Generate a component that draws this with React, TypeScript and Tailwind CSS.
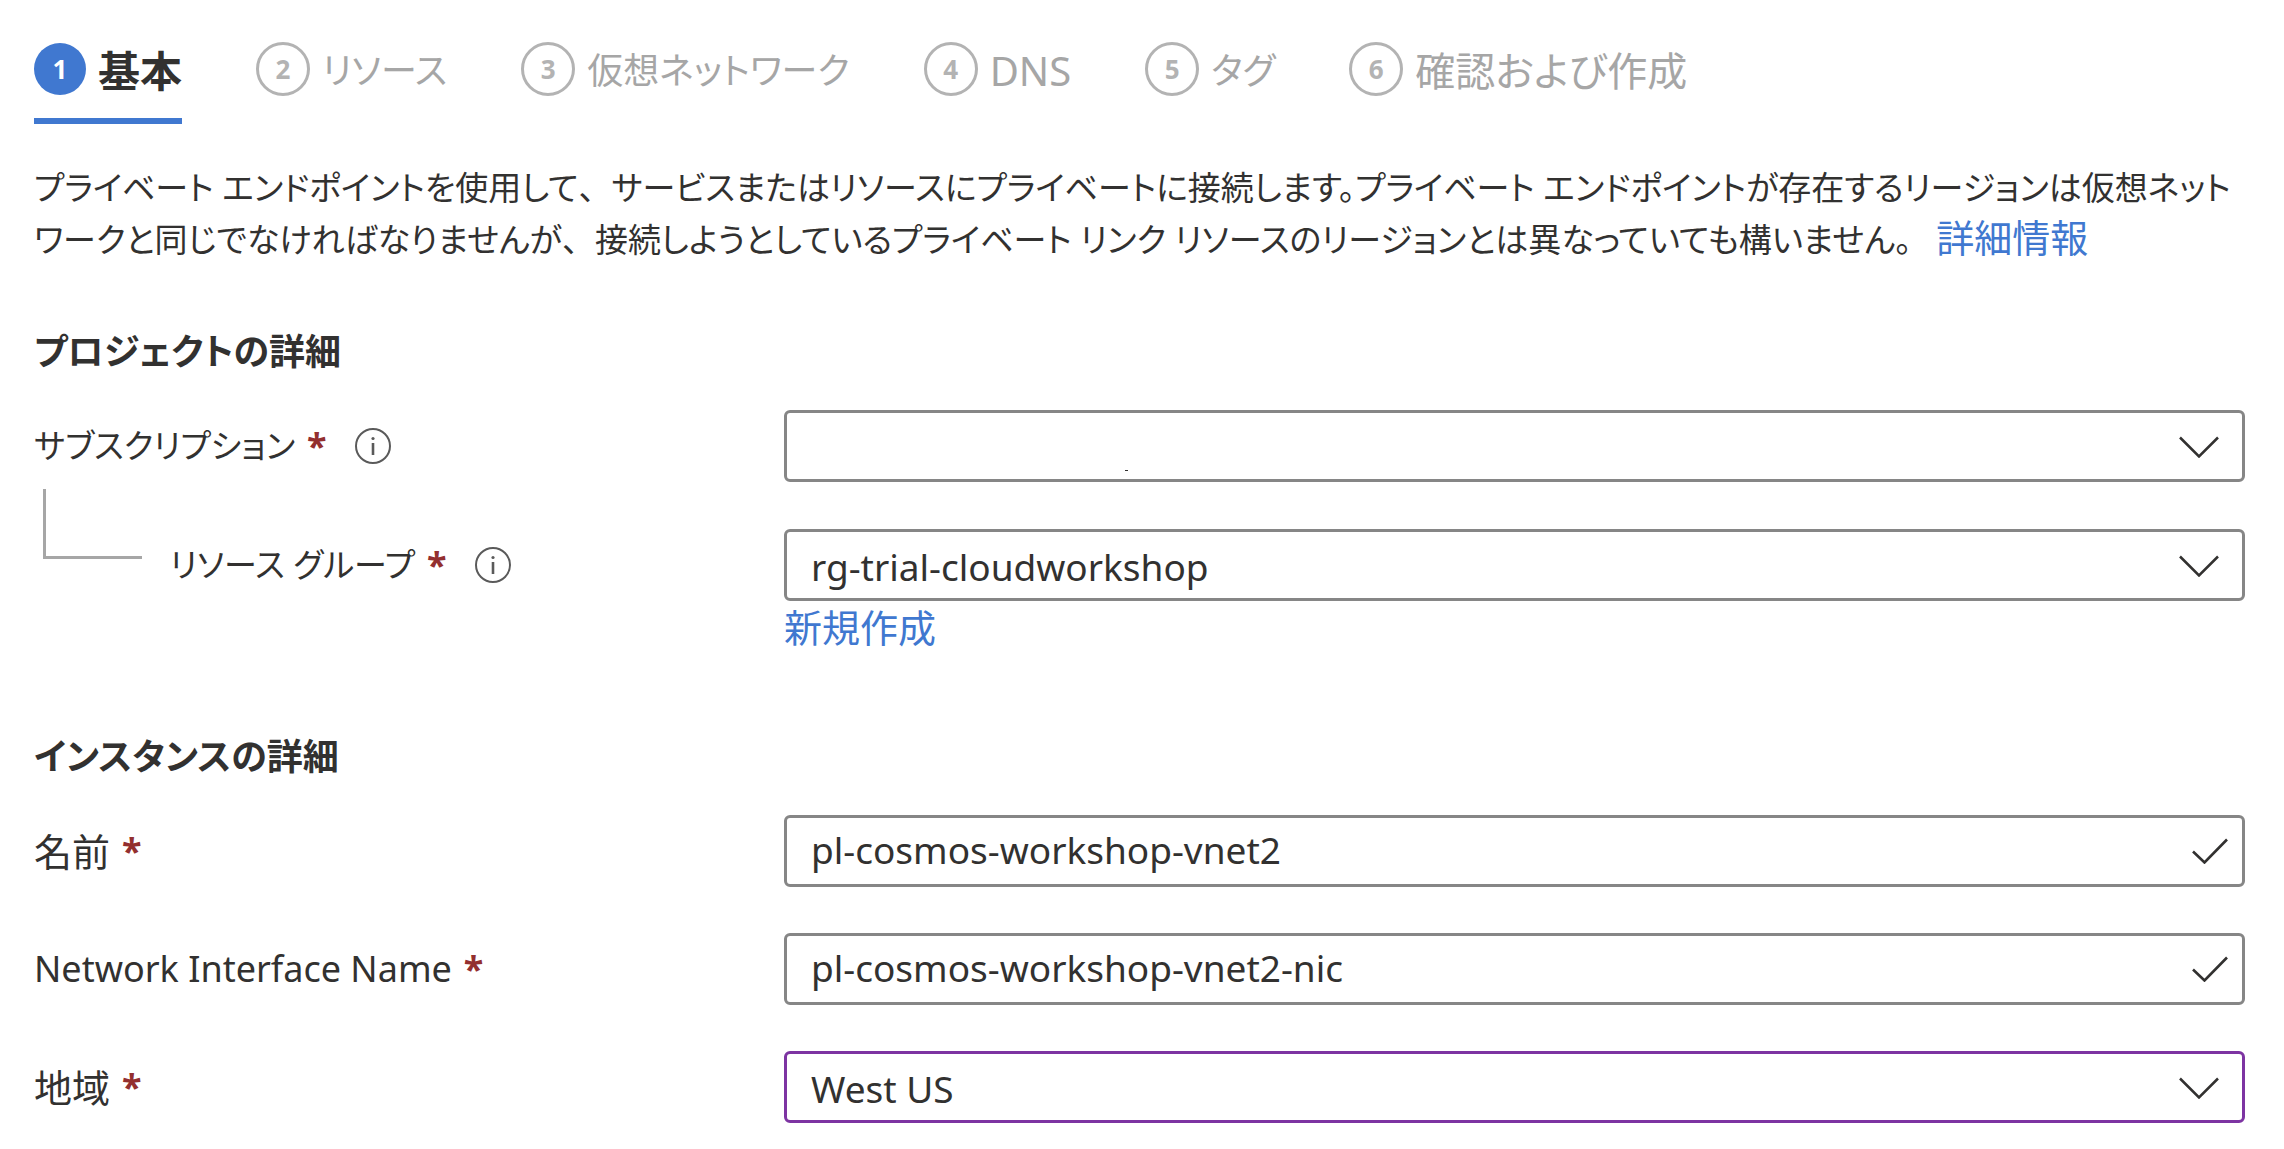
import { useState, type ReactNode } from "react";

const steps = [
  { title: "基本", size: "text-[42px]" },
  { title: "リソース", size: "text-[36px]" },
  { title: "仮想ネットワーク", size: "text-[36px]" },
  { title: "DNS", size: "text-[40px]" },
  { title: "タグ", size: "text-[36px]" },
  { title: "確認および作成", size: "text-[40px]" },
];

function InfoButton({ label }: { label: string }) {
  return (
    <button type="button" aria-label={label} className="ml-7 shrink-0 text-[#5a5a5a]">
      <svg viewBox="0 0 36 36" className="size-9" fill="none" stroke="currentColor" strokeWidth="2">
        <circle cx="18" cy="18" r="17" />
        <path d="M18 15v12" strokeWidth="2.6" />
        <circle cx="18" cy="10.5" r="1.6" fill="currentColor" stroke="none" />
      </svg>
    </button>
  );
}

function Chevron() {
  return (
    <svg viewBox="0 0 40 22" className="pointer-events-none absolute top-[26px] right-[26px] h-[22px] w-10" fill="none" stroke="#323130" strokeWidth="2.5">
      <path d="M1 1.5 20 20.500 39 1.5" />
    </svg>
  );
}

function Check() {
  return (
    <svg viewBox="0 0 36 26" className="pointer-events-none absolute top-[23px] right-[17px] h-[26px] w-9" fill="none" stroke="#323130" strokeWidth="2.6">
      <path d="M1 13.500 12.500 24.500 35 1.500" />
    </svg>
  );
}

function Comma() {
  return <span className="[font-feature-settings:normal]">、</span>;
}

type RowProps = { id: string; label: string; size: string; info?: boolean; nested?: boolean; children: ReactNode };

function Row({ id, label, size, info, nested, children }: RowProps) {
  return (
    <div className="flex items-start">
      <div className="flex h-[72px] w-[750px] shrink-0 items-center">
        {nested && <span className="-mt-[82px] mr-7 ml-[9px] h-[70px] w-[99px] border-b-3 border-l-3 border-[#a6a6a6]" />}
        <label htmlFor={id} className={`flex items-center gap-3 whitespace-nowrap ${size}`}>
          {label}
          <span className="text-[36px] font-bold text-[#932f2f]">*</span>
        </label>
        {info && <InfoButton label={`${label}の情報`} />}
      </div>
      <div className="min-w-0 flex-1">{children}</div>
    </div>
  );
}

const box = "block h-[72px] w-full appearance-none rounded-md border-3 bg-white pl-6 pr-20 text-[37px] outline-none";

function Dropdown({ id, value, active }: { id: string; value: string; active?: boolean }) {
  return (
    <div className="relative">
      <select id={id} className={`${box} pt-1 ${active ? "border-[#7d34a2]" : "border-[#868686]"}`}>
        <option>{value}</option>
      </select>
      {!value && <span className="absolute bottom-[11px] left-[341px] h-px w-[3px] bg-[#323130]" />}
      <Chevron />
    </div>
  );
}

function TextField({ id, initial }: { id: string; initial: string }) {
  const [value, setValue] = useState(initial);
  return (
    <div className="relative">
      <input id={id} type="text" value={value} onChange={(e) => setValue(e.target.value)} className={`${box} border-[#868686] pb-1`} />
      <Check />
    </div>
  );
}

export default function App() {
  return (
    <main
      lang="ja"
      className="min-h-screen bg-white pt-10 pr-[39px] pb-[27px] pl-[34px] font-['Noto_Sans','Noto_Sans_CJK_JP',sans-serif] text-[33px] leading-[52px] text-[#323130] [font-feature-settings:'palt']"
    >
      <nav className="flex gap-[74px]">
        {steps.map((step, i) => (
          <button
            key={step.title}
            type="button"
            aria-current={i === 0 ? "step" : undefined}
            className={
              i === 0
                ? "flex h-[84px] items-start gap-3 border-b-6 border-[#4078d0] font-bold"
                : "flex h-[84px] items-start gap-3 text-[#a6a6a6]"
            }
          >
            <span
              className={
                i === 0
                  ? "mt-[3px] flex size-[52px] items-center justify-center rounded-full bg-[#4078d0] text-[26px] font-bold text-white"
                  : "mt-[2px] flex size-[54px] items-center justify-center rounded-full border-3 border-[#b3b3b3] text-[26px] font-bold text-[#b3b3b3]"
              }
            >
              {i + 1}
            </span>
            <span className={`leading-[62px] whitespace-nowrap ${step.size}`}>{step.title}</span>
          </button>
        ))}
      </nav>

      <p className="mt-[38px]">
        プライベート エンドポイントを使用して
        <Comma />
        サービスまたはリソースにプライベートに接続します。プライベート エンドポイントが存在するリージョンは仮想ネット
        <br />
        ワークと同じでなければなりませんが
        <Comma />
        接続しようとしているプライベート リンク リソースのリージョンとは異なっていても構いません。{" "}
        <a href="#details" className="ml-4 text-[38px] leading-none text-[#4078d0]">詳細情報</a>
      </p>

      <section>
        <h2 className="mt-[60px] text-[36px] font-bold">プロジェクトの詳細</h2>
        <div className="mt-8 flex flex-col gap-[47px]">
          <Row id="subscription" label="サブスクリプション" size="text-[33px]" info>
            <Dropdown id="subscription" value="" />
          </Row>
          <Row id="group" label="リソース グループ" size="text-[33px]" info nested>
            <Dropdown id="group" value="rg-trial-cloudworkshop" />
            <a href="#new" className="block w-fit text-[38px] text-[#4078d0]">新規作成</a>
          </Row>
        </div>
      </section>

      <section>
        <h2 className="mt-[78px] text-[36px] font-bold">インスタンスの詳細</h2>
        <div className="mt-8 flex flex-col gap-[46px]">
          <Row id="name" label="名前" size="text-[38px]">
            <TextField id="name" initial="pl-cosmos-workshop-vnet2" />
          </Row>
          <Row id="nic" label="Network Interface Name" size="text-[36px]">
            <TextField id="nic" initial="pl-cosmos-workshop-vnet2-nic" />
          </Row>
          <Row id="region" label="地域" size="text-[38px]">
            <Dropdown id="region" value="West US" active />
          </Row>
        </div>
      </section>
    </main>
  );
}
